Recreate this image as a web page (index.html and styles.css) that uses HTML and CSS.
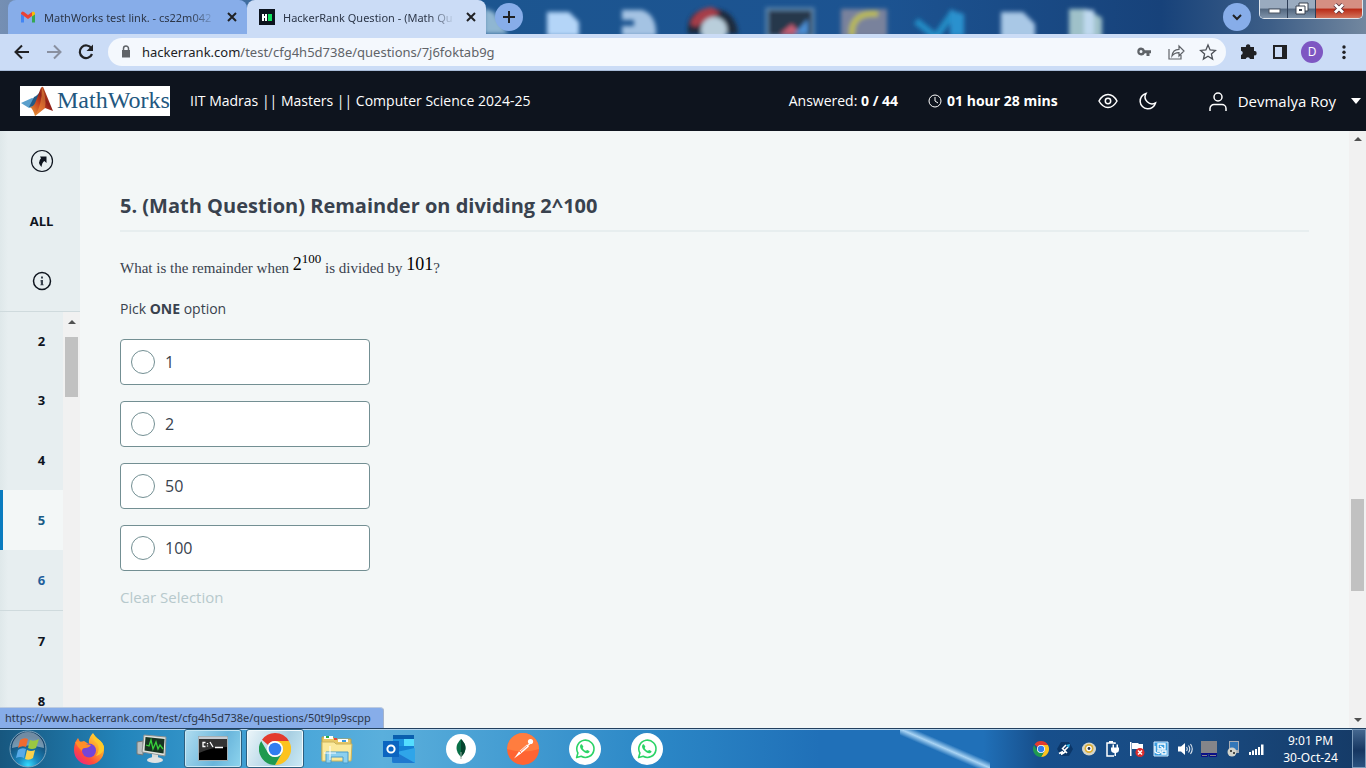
FILE: index.html
```html
<!DOCTYPE html>
<html lang="en">
<head>
<meta charset="utf-8">
<meta name="viewport" content="width=device-width, initial-scale=1">
<title>HackerRank Question - (Math Question) Remainder on dividing 2^100</title>
<link rel="stylesheet" href="styles.css">
</head>
<body>
<svg width="0" height="0" class="defs" aria-hidden="true">
  <defs>
    <symbol id="chrome" viewBox="0 0 48 48">
      <path fill="#e33b2e" d="M24 0a24 24 0 0 1 20.800 12H24a12 12 0 0 0-10.400 6L4.500 10.200A24 24 0 0 1 24 0z"/>
      <path fill="#fcc31e" d="M44.800 12A24 24 0 0 1 24 48l10.400-18A12 12 0 0 0 34.400 18L24 12z"/>
      <path fill="#1f9a50" d="M24 48A24 24 0 0 1 3.200 12l10.400 18A12 12 0 0 0 34.400 30z"/>
      <circle cx="24" cy="24" r="12" fill="#fff"/>
      <circle cx="24" cy="24" r="9.500" fill="#2f7df0"/>
    </symbol>
    <symbol id="whatsapp" viewBox="0 0 32 32">
      <circle cx="16" cy="16" r="16" fill="#fff"/>
      <path d="M7.600 24.600l1.300-4.600a8.600 8.600 0 1 1 3.300 3.300z" fill="none" stroke="#2bd366" stroke-width="1.600" stroke-linejoin="round"/>
      <path d="M13 11.600c-.5-.6-1.300-.3-1.600.3-1 1.700.1 3.800 1.900 5.700 2 2 4.400 3.200 6 2.400 1.200-.6 1.500-1.700 1-2.100l-2-1c-.7-.2-1 .9-1.600.9-1-.2-2.800-1.800-3-2.800 0-.5.900-.9.600-1.500z" fill="#2bd366"/>
    </symbol>
  </defs>
</svg>

<div class="window">
  <header class="tabstrip">
    <svg class="wallpaper" viewBox="0 0 1366 34" preserveAspectRatio="none" aria-hidden="true">
      <defs>
        <linearGradient id="sky" x1="0" x2="1">
          <stop offset="0" stop-color="#758fb3"/><stop offset=".02" stop-color="#6d8ab0"/><stop offset=".3" stop-color="#1c5690"/><stop offset=".65" stop-color="#1c5391"/><stop offset=".85" stop-color="#17427a"/><stop offset=".93" stop-color="#3d5e87"/><stop offset="1" stop-color="#72879f"/>
        </linearGradient>
        <filter id="soft" x="-20%" y="-20%" width="140%" height="140%"><feGaussianBlur stdDeviation="2"/></filter>
      </defs>
      <rect width="1366" height="34" fill="url(#sky)"/>
      <g filter="url(#soft)">
        <path fill="#8fb6d2" d="M484 8l10 4 14 22h-24z"/>
        <path fill="#b4d5f8" d="M547 12h22l10 10v14h-32z"/>
        <path fill="#a4c3e3" d="M622 10h20q15 5 14 26h-34v-10h12v-6h-12z"/>
        <path fill="#1c2b3d" d="M688 34q-3-22 20-26 28 0 30 26z"/>
        <path fill="#a63d49" d="M690 24q5-15 22-17l8 6-24 14z"/>
        <circle cx="714" cy="30" r="13" fill="#b9cedb"/>
        <rect x="767" y="9" width="46" height="28" fill="#28394c" stroke="#5f87ad" stroke-width="3"/>
        <path fill="#c65f73" d="M780 34l12-10 8 10z"/><path fill="#4b8ed4" d="M794 34l14-15v15z"/>
        <rect x="841" y="9" width="46" height="28" fill="#79829c"/>
        <path fill="none" stroke="#b9b956" stroke-width="6" d="M852 36q-2-24 26-22"/>
        <path fill="none" stroke="#248bc4" stroke-width="7" d="M916 21l20 16 18-26"/><path fill="#2c91ce" d="M950 10l14 4v22h-14z"/>
        <path fill="#a9c8e6" d="M1001 12h22l12 12v14h-34z"/>
        <path fill="#9fc1c9" d="M1069 9h18l15 9v20h-33z"/><path fill="#bfd9ef" d="M1084 10h10v26h-10z"/>
      </g>
    </svg>
    <nav class="tabs" aria-label="Tabs">
      <div class="tab">
        <svg class="favicon" viewBox="0 0 16 16"><path fill="#4285f4" d="M1 13.500V5l3 2v6.500z"/><path fill="#34a853" d="M12 13.500V7l3-2v8.500z"/><path fill="#ea4335" d="M1 4q1-2.500 3-1l4 3 4-3v4l-4 3-7-5z"/><path fill="#fbbc04" d="M12 3q2-1.500 3 1v1.200L12 7.400z"/></svg>
        <span class="tab-title">MathWorks test link. - cs22m042</span>
        <button class="tab-close" aria-label="Close tab"><svg viewBox="0 0 16 16"><path d="M4 4l8 8M12 4l-8 8"/></svg></button>
      </div>
      <div class="tab tab-active">
        <svg class="favicon" viewBox="0 0 16 16"><path fill="#0c131d" d="M0 0h16v16H0z"/><path fill="#fff" d="M3 5h2v2h1V5h2v7H6V9H5v3H3z"/><path fill="#0fe15f" d="M9 5h4v7H9z"/></svg>
        <span class="tab-title">HackerRank Question - (Math Qu</span>
        <button class="tab-close" aria-label="Close tab"><svg viewBox="0 0 16 16"><path d="M4 4l8 8M12 4l-8 8"/></svg></button>
      </div>
      <button class="round-button" aria-label="New tab"><svg viewBox="0 0 28 28"><path d="M14 8v12M8 14h12"/></svg></button>
    </nav>
    <div class="window-tools">
      <button class="round-button" aria-label="Search tabs"><svg viewBox="0 0 28 28"><path d="M10 12l4 4 4-4"/></svg></button>
      <div class="window-buttons">
        <button class="win-button" aria-label="Minimize"><svg viewBox="0 0 20 16"><rect x="5" y="8" width="11" height="4" fill="#fff" stroke="#4c5665"/></svg></button>
        <button class="win-button" aria-label="Restore"><svg viewBox="0 0 20 16"><path fill="#fff" stroke="#3a4351" d="M7 2h9v8H7z"/><path fill="#fff" stroke="#3a4351" d="M4 5h9v8H4z"/><path fill="#3a4351" d="M7 8h3v2H7z"/></svg></button>
        <button class="win-button win-close" aria-label="Close"><svg viewBox="0 0 20 16"><path fill="none" stroke="#56303a" stroke-width="4.500" d="M6 3.500l8 8M14 3.500l-8 8"/><path fill="none" stroke="#fff" stroke-width="2.800" d="M6 3.500l8 8M14 3.500l-8 8"/></svg></button>
      </div>
    </div>
  </header>

  <div class="toolbar">
    <button class="tool" aria-label="Back"><svg viewBox="0 0 24 24"><path d="M19 12H6M12 5.500L5.500 12l6.500 6.500" fill="none" stroke="#202124" stroke-width="2"/></svg></button>
    <button class="tool" aria-label="Forward"><svg viewBox="0 0 24 24"><path d="M5 12h13M12 5.500l6.500 6.500-6.500 6.500" fill="none" stroke="#8990a0" stroke-width="2"/></svg></button>
    <button class="tool" aria-label="Reload"><svg viewBox="0 0 24 24"><path d="M17.500 8.500A6.300 6.300 0 1 0 18 14" fill="none" stroke="#202124" stroke-width="2.200"/><path d="M19 4.500V11h-6.500z" fill="#202124"/></svg></button>
    <div class="omnibox">
      <svg class="lock" viewBox="0 0 16 16"><path fill="#5f6368" d="M4 6h8v7.500H4z"/><path fill="none" stroke="#5f6368" stroke-width="1.500" d="M5.500 7V4.500a2.500 2.500 0 0 1 5 0V7"/></svg>
      <span class="url"><span class="url-host">hackerrank.com</span>/test/cfg4h5d738e/questions/7j6foktab9g</span>
      <button class="tool" aria-label="Passwords"><svg viewBox="0 0 24 24"><path fill="#5f6368" fill-rule="evenodd" d="M9 7.500a4 4 0 0 1 3.900 2.700H19v3h-1.500V16h-3v-2.800h-1.600A4 4 0 1 1 9 7.500zm0 2.600a1.500 1.500 0 1 0 0 3 1.500 1.500 0 0 0 0-3z"/></svg></button>
      <button class="tool" aria-label="Share"><svg viewBox="0 0 24 24"><path fill="none" stroke="#5f6368" stroke-width="1.200" d="M5 9v10h12v-4M8 16c.5-4.500 3-6.500 7-6.600V6l5 5-5 5v-3.400c-3-.1-5 .7-7 3.400z"/></svg></button>
      <button class="tool" aria-label="Bookmark"><svg viewBox="0 0 24 24"><path fill="none" stroke="#4c5057" stroke-width="1.300" d="M12 5l2.100 4.900 5.300.5-4 3.500 1.200 5.200L12 16.300l-4.600 2.800 1.200-5.200-4-3.500 5.300-.5z"/></svg></button>
    </div>
    <button class="tool" aria-label="Extensions"><svg viewBox="0 0 24 24"><path fill="#202124" d="M6 7h4a2.200 2.200 0 1 1 4.200 0H18v4a2.200 2.200 0 1 1 0 4.300V19h-4a2.200 2.200 0 0 0-4.300 0H5v-4a2.200 2.200 0 0 0 0-4.300V7z"/></svg></button>
    <button class="tool" aria-label="Side panel"><svg viewBox="0 0 24 24"><path fill="#202124" fill-rule="evenodd" d="M5 5h14v14H5zm2 2v10h7V7z"/></svg></button>
    <button class="tool" aria-label="Profile"><span class="avatar">D</span></button>
    <button class="tool" aria-label="Menu"><svg viewBox="0 0 24 24" fill="#202124"><circle cx="12" cy="7" r="1.700"/><circle cx="12" cy="12.300" r="1.700"/><circle cx="12" cy="17.500" r="1.700"/></svg></button>
  </div>

  <div class="test-header">
    <svg class="brand" viewBox="0 0 150 30" role="img" aria-label="MathWorks">
      <defs><linearGradient id="flame" x1="0" x2="1" y1="1" y2="0"><stop offset="0" stop-color="#e9a33a"/><stop offset=".4" stop-color="#c8431f"/><stop offset=".6" stop-color="#8f1f18"/><stop offset="1" stop-color="#f07f2c"/></linearGradient></defs>
      <path fill="#fff" d="M0 0h150v30H0z"/>
      <path fill="#5a9fcc" d="M1 17l11-5 7 2-6 7-4 1z"/><path fill="#235b86" d="M9 21l5-10q4-1 8-9l-2 17z"/>
      <path fill="url(#flame)" d="M10 21c5 0 6-7 9-14q3-10 5-4l9 22-8-3-10 8q-2-7-5-9z"/>
      <path fill="#f29a3d" d="M22 1q5 12 3 21l-10 8q7-11 7-29z" opacity=".5"/>
      <text x="37" y="22" class="brand-text">MathWorks</text>
    </svg>
    <span class="test-name">IIT Madras || Masters || Computer Science 2024-25</span>
    <div class="test-status">
      <span>Answered: <strong>0 / 44</strong></span>
      <span class="timer"><svg viewBox="0 0 14 14"><circle cx="7" cy="7" r="6"/><path d="M7 3v4l3 2"/></svg><strong>01 hour 28 mins</strong></span>
    </div>
    <div class="view-tools">
      <button class="icon-button" aria-label="View"><svg viewBox="0 0 20 20"><path d="M1 10Q4.500 3.500 10 3.500T19 10Q15.500 16.500 10 16.500T1 10z"/><circle cx="10" cy="10" r="2.700"/></svg></button>
      <button class="icon-button" aria-label="Dark mode"><svg viewBox="0 0 20 20"><path d="M8 2.500a7.800 7.800 0 1 0 9.500 9.500A7 7 0 0 1 8 2.500z"/></svg></button>
    </div>
    <button class="user"><svg viewBox="0 0 20 20"><circle cx="10" cy="6" r="4"/><path d="M2 20v-2.500a4 4 0 0 1 4-4h8a4 4 0 0 1 4 4V20"/></svg><span class="user-name">Devmalya Roy</span><span class="caret"></span></button>
  </div>

  <div class="page">
    <aside class="sidebar">
      <div class="side-tools">
        <button class="side-item" aria-label="Tour"><svg viewBox="0 0 24 24"><circle cx="12" cy="12" r="10.500" fill="none" stroke="#0e141e" stroke-width="1.200"/><path fill="#0e141e" d="M10 7.500h6.500v6.500l-2.200-2q-2.300 1.500-2.800 6-4.500-4.500-.5-8.700z"/></svg></button>
        <button class="side-item">ALL</button>
        <button class="side-item" aria-label="Information"><svg viewBox="0 0 24 24"><circle cx="12" cy="12" r="8.500" fill="none" stroke="#0e141e" stroke-width="1.500"/><path fill="#39424e" d="M11 7.500h2v2h-2zM10.500 11H13v4.500h.7v.8h-3.400v-.8h.7z"/></svg></button>
      </div>
      <div class="side-body">
        <nav class="question-list" aria-label="Questions">
          <a class="question-link" href="#q2">2</a>
          <a class="question-link" href="#q3">3</a>
          <a class="question-link" href="#q4">4</a>
          <a class="question-link current" href="#q5">5</a>
          <a class="question-link hovered" href="#q6">6</a>
          <a class="question-link" href="#q7">7</a>
          <a class="question-link" href="#q8">8</a>
        </nav>
        <div class="scrollbar side-scroll" aria-hidden="true"><i class="arrow-up"></i><i class="thumb"></i></div>
      </div>
    </aside>

    <main class="question">
      <h1 class="question-title">5. (Math Question) Remainder on dividing 2^100</h1>
      <p class="question-text">What is the remainder when <span class="math">2<sup>100</sup></span> is divided by <span class="math">101</span>?</p>
      <form class="answers">
        <p class="hint">Pick <strong>ONE</strong> option</p>
        <label class="option"><input type="radio" name="answer" value="1">1</label>
        <label class="option"><input type="radio" name="answer" value="2">2</label>
        <label class="option"><input type="radio" name="answer" value="50">50</label>
        <label class="option"><input type="radio" name="answer" value="100">100</label>
        <button type="reset" class="clear">Clear Selection</button>
      </form>
    </main>
    <div class="scrollbar page-scroll" aria-hidden="true"><i class="arrow-up"></i><i class="space-before"></i><i class="thumb"></i><i class="space-after"></i><i class="arrow-down"></i></div>
    <div class="link-status">https://www.hackerrank.com/test/cfg4h5d738e/questions/50t9lp9scpp</div>
  </div>

  <footer class="taskbar">
    <button class="start" aria-label="Start"><svg viewBox="0 0 38 38">
      <defs><radialGradient id="orb" cx=".5" cy=".95" r=".8"><stop offset="0" stop-color="#35dcff"/><stop offset=".35" stop-color="#1a86bd"/><stop offset="1" stop-color="#123f66"/></radialGradient></defs>
      <circle cx="19" cy="19" r="18" fill="url(#orb)" stroke="#7fa6bf"/>
      <path fill="#fff" opacity=".4" d="M3 18a16 16 0 0 1 32 0q-16-5-32 0z"/>
      <path fill="#ef6a30" d="M11 10q4-3 8-1l-2 8q-4-2-8 1z"/><path fill="#9ac842" d="M21 10q4 2 9-1l-3 9q-4 2-8 0z"/><path fill="#58aae8" d="M9 20q4-3 8-1l-2 9q-4-2-8 0z"/><path fill="#fbd14c" d="M18 20q4 2 8 0l-2 8q-4 3-8 1z"/>
    </svg></button>
    <button class="task" aria-label="Firefox"><svg viewBox="0 0 32 32">
      <defs><linearGradient id="fox" x1="1" x2=".2" y1="0" y2="1"><stop offset="0" stop-color="#fff04a"/><stop offset=".45" stop-color="#ff9a2b"/><stop offset=".75" stop-color="#ff4a3c"/><stop offset="1" stop-color="#e8238a"/></linearGradient></defs>
      <path fill="url(#fox)" d="M20 0q2 4 5 6 6 4 6 11a15 15 0 0 1-30 0Q1 10 5 5l2 4 4-1q3 2 5 3Q15 5 20 0z"/>
      <circle cx="16" cy="17.500" r="7" fill="#7545d8"/><path fill="#ff8f27" d="M2 9q6-2 10 2l6 1q-2 3-6 3-3 0-3 3-4-3-7-9z"/><path fill="#ffc928" d="M20 1q0 7 4 9 4 6-1 13 7-2 8-8 0-5-6-9z"/>
    </svg></button>
    <button class="task" aria-label="System monitor"><svg viewBox="0 0 32 32">
      <path fill="#b9bfc0" stroke="#6f7677" d="M2 9l6-1v14l-6-1z"/><path fill="#e1e4df" stroke="#8b9090" d="M9 2l22 2-1 19-23-4z"/><path fill="#183322" d="M10.500 4l19 2-1 14.500-19-3z"/><path fill="none" stroke="#37d23a" stroke-width="1.300" d="M11 12l3 1 2-6 2 9 3-7 2 7 2-4 3 4"/><path fill="#d9dcda" d="M17 21l6 1v4l-6-1z"/><ellipse cx="20" cy="27" rx="8" ry="3" fill="#dfe2e2"/>
    </svg></button>
    <button class="task open" aria-label="Command prompt"><svg viewBox="0 0 32 32"><path fill="#000" stroke="#a5b0b5" d="M1.500 3.500h29v24h-29z"/><path fill="#c5cbd2" d="M2 4h28v2H2z"/><path fill="#333" d="M2 6h28v8Q14 14 2 20z"/><path fill="none" stroke="#fff" stroke-width="1.300" d="M8.500 9.500H6v4h2.500M10.500 10v1.200m0 1.300v1M13 9l3 5M18 14.500h8"/></svg></button>
    <button class="task open focused" aria-label="Chrome"><svg viewBox="0 0 32 32"><use href="#chrome"/></svg></button>
    <button class="task" aria-label="File Explorer"><svg viewBox="0 0 32 32"><path fill="#e8c865" stroke="#b89f4a" d="M1 4h11l2 2h16v20H1z"/><path fill="#fff" d="M3 3h9v3H3zM17 6h10v3H17z"/><path fill="#25ad45" d="M5 3h3v2H5z"/><path fill="#e34a3d" d="M13 5h3v2h-3z"/><path fill="#3c9be3" d="M21 7h4v2h-4z"/><path fill="#fbe99b" stroke="#cbb45f" d="M1 9h12l2 2h16l-1 17H1z"/><path fill="#8bd0ef" stroke="#4a9cc8" d="M5 19h22v11h-5v-6H10v6H5z"/><path stroke="#fff" d="M9 13v14M3 20h12"/></svg></button>
    <button class="task" aria-label="Outlook"><svg viewBox="0 0 32 32"><path fill="#0a5fae" d="M10 2h21v5H10z"/><path fill="#1d93e0" d="M10 6h11v14H10z"/><path fill="#54ddff" d="M21 6h10v8H21z"/><path fill="#1480d4" d="M10 13h21v7H10z"/><path fill="#2fa5e9" d="M9 20l23-5v15H9z"/><path fill="#1e78cf" d="M9 17l23 13H11q-2 0-2-2z"/><path fill="#0b64c0" d="M0 8h16v16H0z"/><circle cx="8" cy="16" r="3.600" fill="none" stroke="#fff" stroke-width="2"/></svg></button>
    <button class="task" aria-label="MongoDB Compass"><svg viewBox="0 0 32 32"><circle cx="16" cy="16" r="15" fill="#fff"/><path fill="#0a7048" d="M16 6q9 9 0 18-9-9 0-18z"/><path fill="#04452f" d="M16 6q9 9 0 18z"/><path stroke="#97aaa1" d="M16 19v7"/></svg></button>
    <button class="task" aria-label="Postman"><svg viewBox="0 0 32 32"><circle cx="16" cy="16" r="16" fill="#ff6432"/><path fill="#ff8745" d="M0 16a16 16 0 0 1 32 0q-16 5-32 0z" opacity=".7"/><path fill="#fff" d="M7 25.500l5-7 8-7 2 2-8 7z"/><circle cx="23.500" cy="8.500" r="2.600" fill="#fff"/><path stroke="#ff6c3b" stroke-width=".8" d="M13 19l8-7M12 18l3 3"/><path stroke="#fff" stroke-width="1.200" d="M20 13l5-4"/></svg></button>
    <button class="task" aria-label="WhatsApp"><svg viewBox="0 0 32 32"><use href="#whatsapp"/></svg></button>
    <button class="task" aria-label="WhatsApp"><svg viewBox="0 0 32 32"><use href="#whatsapp"/></svg></button>
    <div class="tray">
      <svg viewBox="0 0 16 16"><use href="#chrome"/></svg>
      <svg viewBox="0 0 16 16"><path fill="#0b3668" d="M4 1h8l4 7-4 7H4L0 8z"/><path fill="none" stroke="#fff" stroke-width="1.600" d="M2 12.500l4-2M4 13.500l4-2.500M5 7l5 5M6 7l3-3M8 9l3-3"/><path fill="#31b8ec" d="M9 4l3 3 1-4z"/></svg>
      <svg viewBox="0 0 16 16"><ellipse cx="8" cy="8" rx="7" ry="6.500" fill="#d5d4c8"/><circle cx="8" cy="7.500" r="4.500" fill="#dcae35"/><circle cx="8" cy="7.500" r="2.800" fill="#fff"/><circle cx="8" cy="7.500" r="1.400" fill="#26334d"/></svg>
      <svg viewBox="0 0 16 16"><path fill="none" stroke="#fff" stroke-width="1.500" d="M10 3V2H2v13h7M4 .8h4"/><path fill="#fff" d="M6 6.500h8v2q0 3-3 3.500H9q-3-.5-3-3.500zM7.500 3.500H9v3H7.500zM11.500 3.500H13v3h-1.500zM9.500 12H11v3H9.500z"/></svg>
      <svg viewBox="0 0 16 16"><path fill="#fff" d="M1 1h1.500v14H1zM3 2h6l1 1h4v6H9L8 8H3z"/><circle cx="11" cy="11.500" r="4.500" fill="#dc2c2c"/><path stroke="#fff" stroke-width="1.500" d="M9 9.500l4 4M13 9.500l-4 4"/></svg>
      <svg viewBox="0 0 16 16"><path fill="#3b9de0" stroke="#d2eaff" d="M1 1h14v14H1z"/><path fill="none" stroke="#fff" stroke-width="1.300" d="M5 3h7v5H5zM7 5l3 2M4 10h4M9 10h4v3H9zM2 5v6q4 3 6 0"/></svg>
      <svg viewBox="0 0 16 16"><path fill="#fff" d="M1 5.500h3L8 2v12l-4-3.500H1z"/><path fill="none" stroke="#e0e8f0" stroke-width="1.100" d="M9.500 6q1.500 2 0 4M11.500 4.500q2.500 3.500 0 7M13.500 3q3.500 5 0 10"/></svg>
      <svg viewBox="0 0 16 16"><path fill="#858589" d="M0 0h16v12H0z"/><path fill="none" stroke="#0b0f86" d="M0 12.500h16"/><path fill="#858589" stroke="#0b0f86" d="M.5 13.500h6v2h-6zM8.500 13.500h7v2h-7z"/></svg>
      <svg viewBox="0 0 16 16"><path fill="#a6acb5" d="M4 0h10v12H4z"/><path fill="#3277b9" d="M5 1h8v8H5z"/><circle cx="7" cy="11" r="4.500" fill="#d3d3ca"/><path fill="#4b4b48" d="M5 9h2v2H5zM8 11h2v2H8z"/></svg>
      <svg viewBox="0 0 16 16" fill="#fff"><path d="M0 11h2v3H0zM3 9.500h2V14H3zM6 8h2v6H6zM9 6h2v8H9zM12 3.500h2.500V14H12z"/></svg>
    </div>
    <div class="clock"><time>9:01 PM</time><span>30-Oct-24</span></div>
    <button class="show-desktop" aria-label="Show desktop"></button>
  </footer>
</div>
</body>
</html>
```

FILE: styles.css
```css
* { box-sizing: border-box; }

body {
  margin: 0;
  font-family: "Open Sans", "Noto Sans", sans-serif;
  color: #39424e;
}

button {
  margin: 0;
  padding: 0;
  border: 0;
  background: none;
  font: inherit;
  color: inherit;
}

svg { display: block; flex: none; }
.defs { position: absolute; }

.window {
  display: flex;
  flex-direction: column;
  height: 100vh;
  overflow: hidden;
}

/* Tab strip */
.tabstrip {
  position: relative;
  display: flex;
  flex: none;
  justify-content: space-between;
  height: 34px;
}
.wallpaper {
  position: absolute;
  inset: 0;
  width: 100%;
  height: 100%;
}
.tabs {
  position: relative;
  display: flex;
  align-items: center;
  padding-left: 8px;
}
.tab {
  display: flex;
  align-items: center;
  gap: 8px;
  width: 239px;
  height: 34px;
  padding: 0 7px 0 12px;
  border-radius: 8px 8px 0 0;
  background: #87ade9;
  color: #2c3648;
  font-family: "Noto Sans", "Open Sans", sans-serif;
  font-size: 11px;
}
.tab-active { background: #cbdcf6; }
.favicon { width: 16px; height: 16px; }
.tab-title {
  flex: 1;
  white-space: nowrap;
  mask-image: linear-gradient(to right, #000 85%, transparent);
}
.tab-close svg { width: 16px; height: 16px; stroke: #202124; stroke-width: 2; }
.round-button {
  width: 28px;
  height: 28px;
  border-radius: 50%;
  background: #87ade9;
}
.round-button svg {
  width: 28px;
  height: 28px;
  fill: none;
  stroke: #202124;
  stroke-width: 2;
}
.tabs .round-button { margin-left: 9px; }
.window-tools {
  position: relative;
  display: flex;
  align-items: center;
  gap: 8px;
  padding-right: 3px;
}
.window-buttons {
  display: flex;
  align-self: flex-start;
  height: 19px;
  border: 1px solid #dfe5ec;
  border-top: 0;
  border-radius: 0 0 5px 5px;
  overflow: hidden;
}
.win-button {
  display: grid;
  place-items: center;
  width: 28px;
  border-right: 1px solid #2e3e56;
  background: linear-gradient(#9aabbf 45%, #53677f 50%, #8094ab);
}
.win-button svg { width: 20px; height: 16px; }
.win-close {
  width: 46px;
  border-right: 0;
  background: linear-gradient(#d58f82 45%, #b92a16 50%, #d3745c);
}

/* Address bar */
.toolbar {
  display: flex;
  flex: none;
  align-items: center;
  height: 37px;
  padding: 0 6px;
  border-bottom: 1px solid #a8bcd9;
  background: #cbdcf6;
}
.tool {
  display: grid;
  flex: none;
  place-items: center;
  width: 32px;
  height: 28px;
}
.tool svg { width: 24px; height: 24px; }
.omnibox {
  display: flex;
  flex: 1;
  align-items: center;
  min-width: 0;
  height: 28px;
  margin: 0 6px;
  padding: 0 2px 0 10px;
  border-radius: 14px;
  background: #f4f8fd;
}
.lock { width: 16px; height: 16px; }
.url {
  flex: 1;
  padding-left: 8px;
  overflow: hidden;
  color: #5f6368;
  font-family: "Noto Sans", "Open Sans", sans-serif;
  font-size: 13px;
  white-space: nowrap;
}
.url-host { color: #202124; }
.avatar {
  width: 22px;
  height: 22px;
  border-radius: 50%;
  background: #7e57c2;
  color: #fff;
  font-size: 12px;
  line-height: 22px;
  text-align: center;
}

/* Test header */
.test-header {
  display: flex;
  flex: none;
  align-items: center;
  height: 60px;
  padding: 0 5px 0 20px;
  background: #0e141e;
  color: #fff;
  font-size: 14px;
  line-height: 18px;
  white-space: nowrap;
}
.brand { width: 150px; height: 30px; }
.brand-text {
  fill: #22577f;
  font-family: "Liberation Serif", serif;
  font-size: 24px;
}
.test-name { margin-left: 20px; }
.test-status {
  display: flex;
  gap: 30px;
  margin-left: auto;
}
.timer { display: flex; align-items: center; gap: 5px; }
.timer svg { width: 14px; height: 14px; fill: none; stroke: #fff; }
.view-tools { display: flex; gap: 20px; margin-left: 40px; }
.icon-button svg,
.user svg {
  width: 20px;
  height: 20px;
  fill: none;
  stroke: #fff;
  stroke-width: 1.5;
}
.user {
  display: flex;
  align-items: center;
  margin-left: 50px;
}
.user-name { margin: 0 15px 0 10px; font-size: 15px; }
.caret {
  border: 5px solid transparent;
  border-top: 6px solid #fff;
  border-bottom: 0;
}

/* Page */
.page {
  position: relative;
  display: flex;
  flex: 1;
  min-height: 0;
  background: #f3f7f7;
}
.sidebar {
  display: flex;
  flex: none;
  flex-direction: column;
  width: 80px;
  background: linear-gradient(to right, #dfe8ea, #e7eef0 8px);
  color: #0e141e;
  font-size: 13px;
  font-weight: 700;
}
.side-tools {
  display: flex;
  flex: none;
  flex-direction: column;
  padding-left: 3px;
  border-bottom: 1px solid #cfdadd;
}
.side-item { display: grid; place-items: center; height: 60px; }
.side-item svg { width: 24px; height: 24px; }
.side-body { display: flex; flex: 1; min-height: 0; }
.question-list { flex: 1; overflow: hidden; }
.question-link {
  display: flex;
  align-items: center;
  justify-content: center;
  height: 60px;
  padding-left: 20px;
  color: #0e141e;
  text-decoration: none;
}
.question-link:first-child { height: 58px; }
.question-link.current {
  padding-left: 17px;
  border-left: 3px solid #097bbf;
  background: #f3f7f7;
  color: #1b5d87;
}
.question-link.hovered {
  height: 61px;
  border-bottom: 1px solid #cfdadd;
  color: #1f5f9c;
}
.scrollbar {
  display: flex;
  flex: none;
  flex-direction: column;
  align-items: center;
  width: 17px;
  background: #f1f1f1;
}
.thumb { width: 13px; background: #c1c1c1; }
.arrow-up,
.arrow-down {
  flex: none;
  margin: 6px 0;
  border: 4px solid transparent;
}
.arrow-up { border-top: 0; border-bottom: 4px solid #505050; }
.arrow-down { border-bottom: 0; border-top: 4px solid #505050; }
.side-scroll .arrow-up { margin: 8px 0 13px; }
.side-scroll .thumb { height: 60px; }
.page-scroll .space-before { flex: 351; }
.page-scroll .thumb { flex: 91; }
.page-scroll .space-after { flex: 121; }

.question { flex: 1; min-width: 0; padding: 61px 40px 0; }
.question-title {
  margin: 0;
  padding-bottom: 10px;
  border-bottom: 2px solid #e7eeef;
  font-size: 20px;
  font-weight: 700;
  line-height: 28px;
}
.question-text {
  margin: 22px 0 0;
  font-family: "Liberation Serif", "Times New Roman", serif;
  font-size: 15px;
  line-height: 28px;
}
.math {
  color: #000;
  font-size: 18px;
  line-height: 20px;
  vertical-align: 3px;
}
.math sup { font-size: 13px; line-height: 0; }
.answers {
  display: flex;
  flex-direction: column;
  align-items: flex-start;
  gap: 16px;
  margin-top: 17px;
}
.hint { margin: 0 0 4px; font-size: 14px; line-height: 20px; }
.option {
  display: flex;
  align-items: center;
  gap: 10px;
  width: 250px;
  height: 46px;
  padding-left: 10px;
  border: 1px solid #738f93;
  border-radius: 4px;
  background: #fff;
  font-size: 16px;
}
.option input {
  width: 24px;
  height: 24px;
  margin: 0;
  border: 1px solid #738f93;
  border-radius: 50%;
  appearance: none;
}
.option input:checked { border: 7px solid #097bbf; }
.clear { color: #b7c9cc; font-size: 15px; line-height: 20px; }

.link-status {
  position: absolute;
  bottom: 0;
  left: 0;
  height: 21px;
  padding: 0 12px 0 5px;
  border-top: 1px solid #bccbe0;
  border-right: 1px solid #a4b4cc;
  border-radius: 0 4px 0 0;
  background: #87ade9;
  color: #2c3648;
  font-family: "Noto Sans", "Open Sans", sans-serif;
  font-size: 11px;
  line-height: 20px;
}

/* Taskbar */
.taskbar {
  display: flex;
  flex: none;
  gap: 4px;
  height: 40px;
  border-top: 1px solid #22405f;
  background:
    linear-gradient(#b5d5ee, #b5d5ee) top / 100% 1px no-repeat,
    linear-gradient(to top right, transparent 42%, #a9d4f4 50%, transparent 58%) 900px 0 / 90px 100% no-repeat,
    linear-gradient(to right, #17577f, #2385bb 9%, #45a4d8 20%, #5aafdc 28%, #2b87c6 48%, #2070b8 60%, #2070b8 72%, #174f8c 76%, #194a80 88%, #153a66);
}
.start { display: grid; place-items: center; width: 56px; }
.start svg { width: 38px; height: 38px; }
.task {
  display: grid;
  place-items: center;
  width: 58px;
  border: 1px solid transparent;
  border-radius: 3px;
}
.task svg { width: 32px; height: 32px; }
.task.open {
  border-color: #2d5f7f;
  background: linear-gradient(115deg, #b1ddf0, #69b5db 60%, #8ed4ee);
  box-shadow: inset 0 0 0 1px #c6e7f5;
}
.task.focused {
  background: linear-gradient(115deg, #edf6fa, #a8cfe2 60%, #cdebf6);
  box-shadow: inset 0 0 0 1px #f2fafd;
}
.tray { display: flex; align-items: center; gap: 8px; margin-left: auto; }
.tray svg { width: 16px; height: 16px; }
.clock {
  display: flex;
  flex-direction: column;
  justify-content: center;
  width: 75px;
  margin-left: 4px;
  color: #fff;
  font-family: "Noto Sans", "Open Sans", sans-serif;
  font-size: 12px;
  line-height: 17px;
  text-align: center;
}
.show-desktop {
  width: 14px;
  border: 1px solid #7c9bbb;
  background: linear-gradient(#44678f, #163661 55%, #2b5380);
}
```
